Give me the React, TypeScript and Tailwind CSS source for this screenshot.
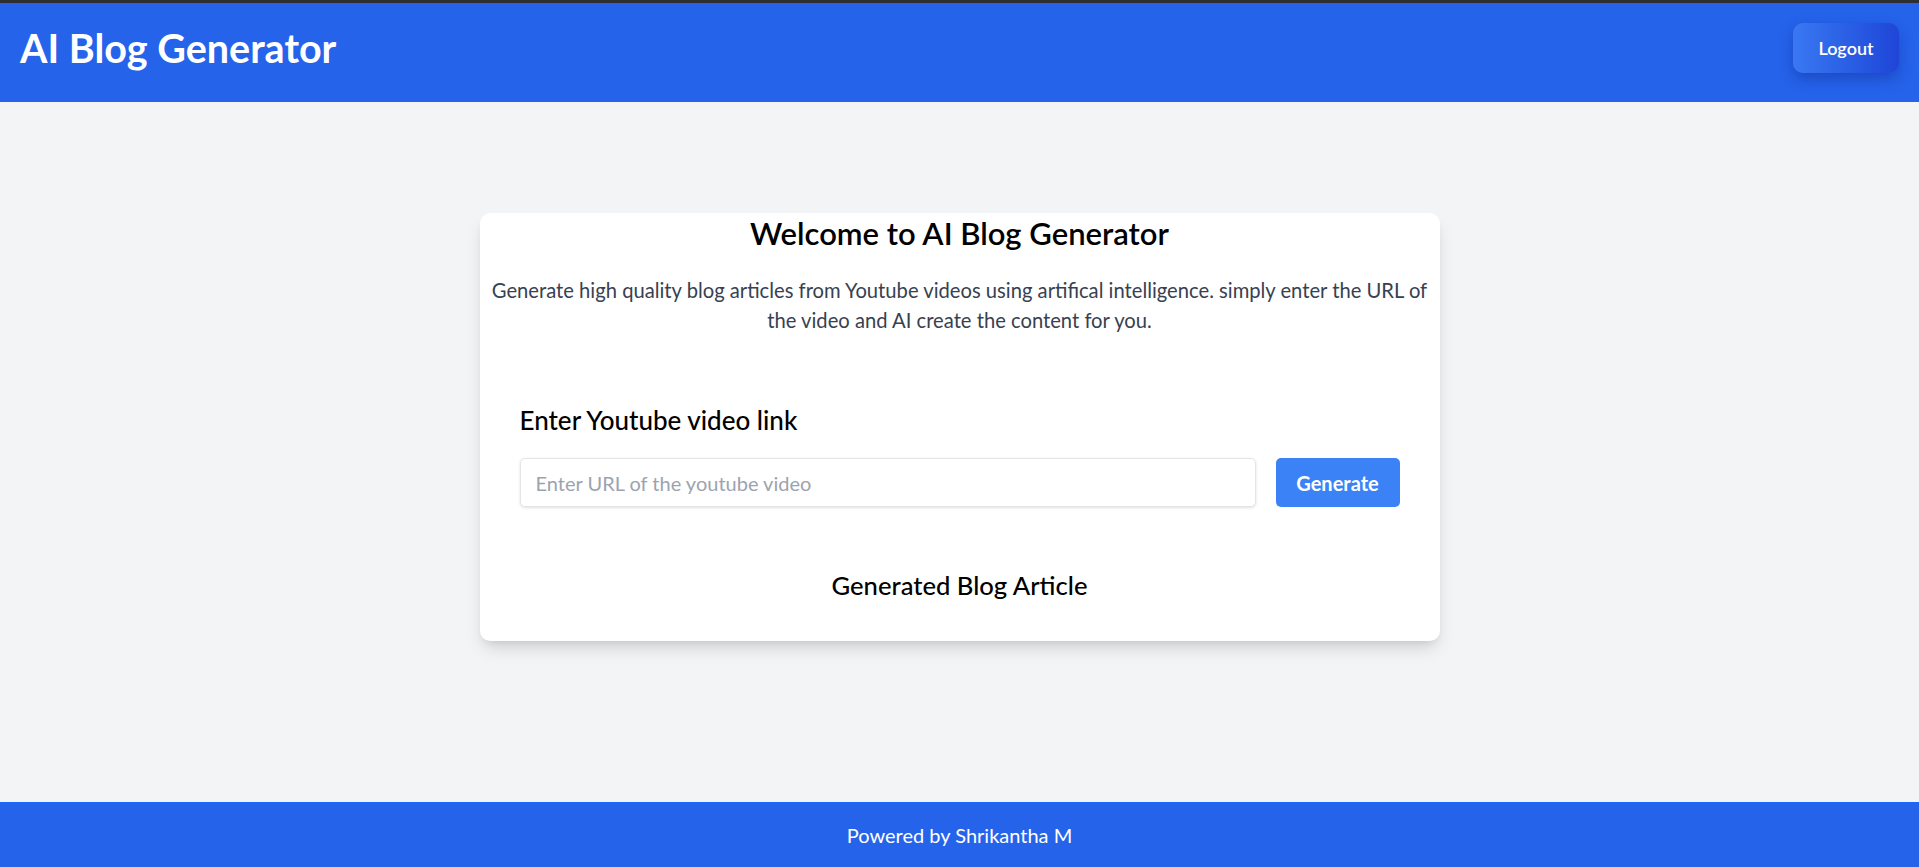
export default function App() {
  return (
    <div className="min-h-screen flex flex-col bg-[#f3f4f6] font-['Lato','Noto_Sans',sans-serif]">
      <div className="h-[3px] bg-[#2d2f33]" />
      <header className="bg-[#2563eb] border-b border-[#1a66ff] px-5 pt-5 pb-[28px] flex items-center justify-between">
        <h1 className="text-[39.5px] leading-[50px] font-bold text-white">AI Blog Generator</h1>
        <button className="h-[50px] w-[106px] rounded-[10px] bg-linear-to-r from-[#3a78f2] to-[#1f45d8] text-white text-[18px] font-semibold shadow-[0_6px_14px_rgba(15,30,120,0.35)]">
          Logout
        </button>
      </header>

      <main className="flex-1 pt-[111px]">
        <div className="max-w-[960px] mx-auto bg-white rounded-[10px] shadow-[0_10px_18px_-4px_rgba(0,0,0,0.15),0_4px_8px_-4px_rgba(0,0,0,0.1)] pb-[38px]">
          <h2 className="text-[31px] leading-[40px] font-semibold text-black text-center">
            Welcome to AI Blog Generator
          </h2>
          <p className="mt-[22px] px-[12px] text-[20.2px] leading-[30px] text-[#374151] text-center">
            Generate high quality blog articles from Youtube videos using artifical intelligence. simply enter the URL of
            <br />
            the video and AI create the content for you.
          </p>

          <div className="mt-[68px] px-[40px]">
            <h2 className="text-[26px] leading-[35px] font-medium text-black">Enter Youtube video link</h2>
            <div className="mt-[20px] flex gap-[20px]">
              <input
                type="text"
                placeholder="Enter URL of the youtube video"
                className="flex-1 h-[49px] px-[15px] text-[20px] border border-[#e2e4e8] rounded-[5px] shadow-[0_1px_3px_rgba(0,0,0,0.12)] placeholder:text-[#9ca3af] outline-none"
              />
              <button className="w-[124px] h-[49px] rounded-[5px] bg-[#3b82f6] text-white text-[20px] font-bold">
                Generate
              </button>
            </div>
          </div>

          <h2 className="mt-[61px] text-[25.6px] leading-[35px] font-medium text-black text-center">
            Generated Blog Article
          </h2>
        </div>
      </main>

      <footer className="h-[65px] bg-[#2563eb] border-t border-[#1a66ff] flex items-center justify-center">
        <p className="text-[20px] text-white">Powered by Shrikantha M</p>
      </footer>
    </div>
  )
}
